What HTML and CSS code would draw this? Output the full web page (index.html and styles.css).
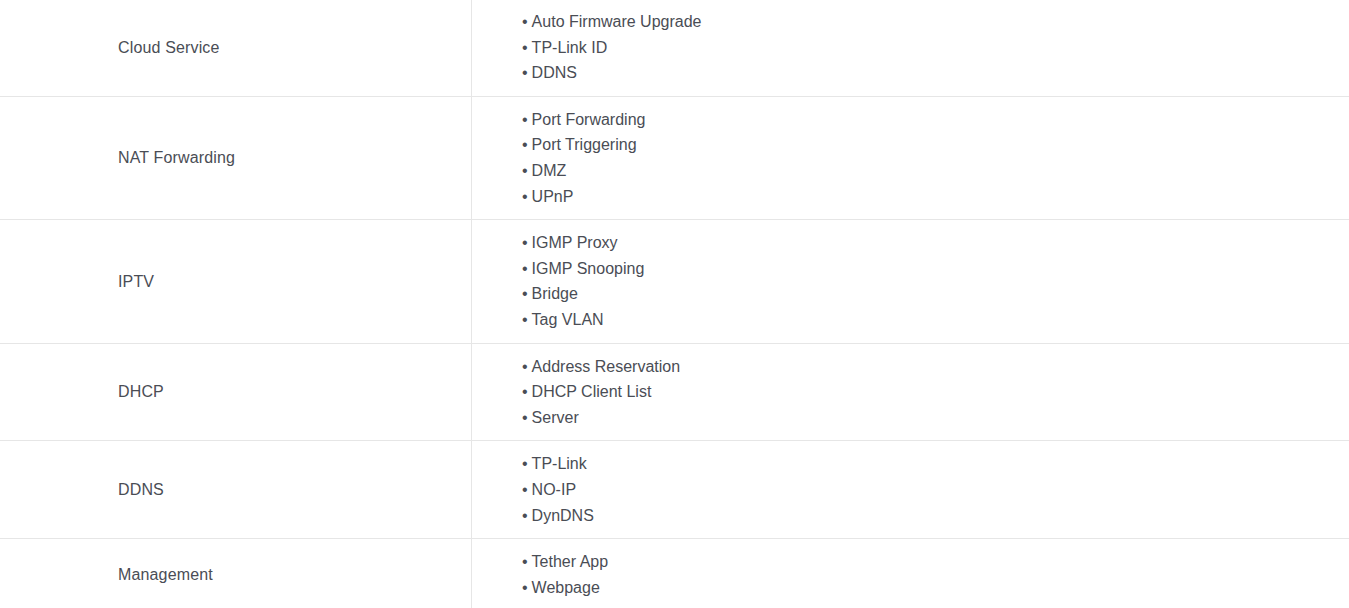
FILE: index.html
```html
<!DOCTYPE html>
<html lang="en">
<head>
<meta charset="utf-8">
<title>Specs</title>
<link rel="stylesheet" href="styles.css">
</head>
<body>
<table class="spec">
  <tr>
    <th class="label">Cloud Service</th>
    <td class="value"><ul><li>Auto Firmware Upgrade</li><li>TP-Link ID</li><li>DDNS</li></ul></td>
  </tr>
  <tr>
    <th class="label">NAT Forwarding</th>
    <td class="value"><ul><li>Port Forwarding</li><li>Port Triggering</li><li>DMZ</li><li>UPnP</li></ul></td>
  </tr>
  <tr>
    <th class="label">IPTV</th>
    <td class="value"><ul><li>IGMP Proxy</li><li>IGMP Snooping</li><li>Bridge</li><li>Tag VLAN</li></ul></td>
  </tr>
  <tr>
    <th class="label">DHCP</th>
    <td class="value"><ul><li>Address Reservation</li><li>DHCP Client List</li><li>Server</li></ul></td>
  </tr>
  <tr>
    <th class="label">DDNS</th>
    <td class="value"><ul><li>TP-Link</li><li>NO-IP</li><li>DynDNS</li></ul></td>
  </tr>
  <tr>
    <th class="label">Management</th>
    <td class="value"><ul><li>Tether App</li><li>Webpage</li></ul></td>
  </tr>
</table>
</body>
</html>
```
FILE: styles.css
```css
html, body {
  margin: 0;
  padding: 0;
  background: #ffffff;
}
body {
  font-family: "Liberation Sans", Arial, sans-serif;
  font-size: 16px;
  line-height: 25.6px;
  color: #4a4d55;
}
.spec {
  width: 100%;
  border-collapse: collapse;
  margin-top: -1px;
}
.spec tr {
  border-bottom: 1px solid #e6e6e6;
}
.label {
  width: 353px;
  padding: 10px 0 10px 118px;
  text-align: left;
  font-weight: 400;
  border-right: 1px solid #e6e6e6;
  vertical-align: middle;
  letter-spacing: 0.15px;
}
.value {
  padding: 10px 0 10px 50px;
  vertical-align: middle;
}
.value ul {
  list-style: none;
  margin: 0;
  padding: 0;
}
.value li::before {
  content: "\2022";
  margin-right: 4px;
}
```
